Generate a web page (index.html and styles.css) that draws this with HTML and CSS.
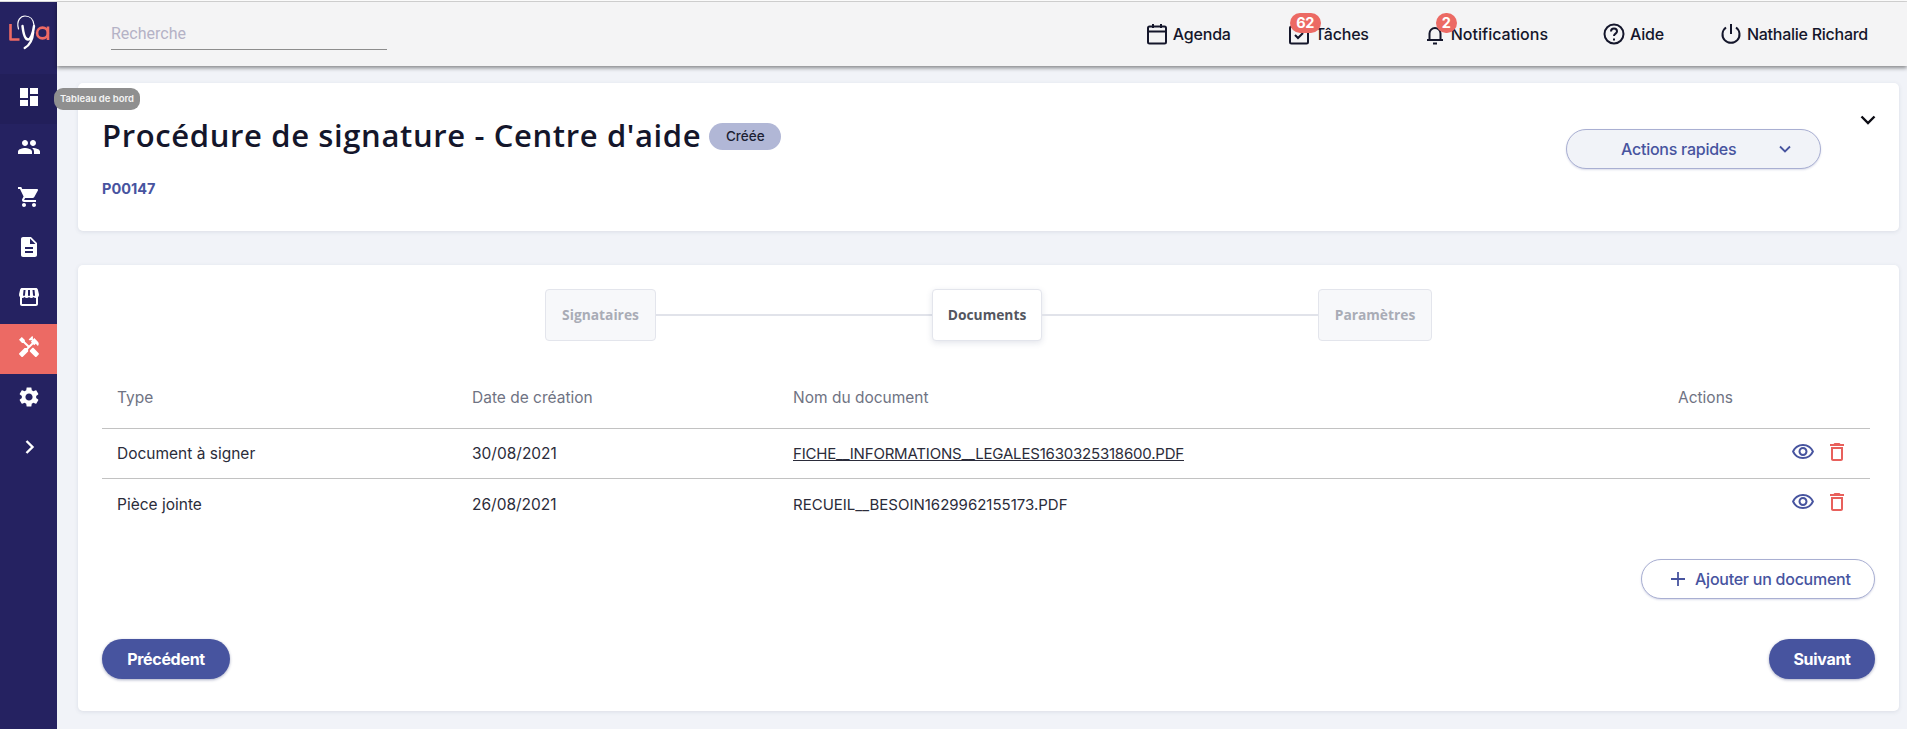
FILE: index.html
```html
<!DOCTYPE html>
<html lang="fr">
<head>
<meta charset="utf-8">
<title>Procédure de signature</title>
<link rel="stylesheet" href="styles.css">
</head>
<body>
<div class="app">
  <nav class="sidebar">
    <div class="logo">
      <svg width="57" height="64" viewBox="0 0 57 64" fill="none">
        <path d="M10.500 22V37.500H19.500" stroke="#ee6a64" stroke-width="2.600" stroke-linejoin="round"/>
        <path d="M22.500 24c1 9 3 13.500 5.500 13.500S33 32 34 24M33.200 30c-.6 8-3 13-8.500 16" stroke="#fff" stroke-width="2.400" stroke-linecap="round"/>
        <path d="M18.500 27C16 18 21 14 25 14c5 0 8.500 3.500 9 9" stroke="#fff" stroke-width="1.200" stroke-linecap="round"/>
        <circle cx="42.500" cy="31" r="5.400" stroke="#ee6a64" stroke-width="2.600"/>
        <path d="M48 24.500V38" stroke="#ee6a64" stroke-width="2.600"/>
      </svg>
    </div>
    <a class="nav-item nav-dark">
      <svg class="nav-icon" viewBox="0 0 24 24"><path d="M3 13h8V3H3v10zm0 8h8v-6H3v6zm10 0h8V11h-8v10zm0-18v6h8V3h-8z"/></svg>
      <span class="tooltip">Tableau de bord</span>
    </a>
    <a class="nav-item">
      <svg class="nav-icon" viewBox="0 0 24 24"><path d="M16 11c1.660 0 2.990-1.340 2.990-3S17.660 5 16 5c-1.660 0-3 1.340-3 3s1.340 3 3 3zm-8 0c1.660 0 2.990-1.340 2.990-3S9.660 5 8 5C6.340 5 5 6.340 5 8s1.340 3 3 3zm0 2c-2.330 0-7 1.170-7 3.500V19h14v-2.500c0-2.330-4.670-3.500-7-3.500zm8 0c-.29 0-.62.020-.97.050 1.160.84 1.970 1.970 1.970 3.450V19h6v-2.500c0-2.330-4.670-3.500-7-3.500z"/></svg>
    </a>
    <a class="nav-item">
      <svg class="nav-icon" viewBox="0 0 24 24"><path d="M7 18c-1.100 0-1.990.9-1.990 2S5.900 22 7 22s2-.9 2-2-.9-2-2-2zM1 2v2h2l3.600 7.590-1.350 2.450c-.16.280-.25.610-.25.960 0 1.100.9 2 2 2h12v-2H7.420c-.14 0-.25-.11-.25-.25l.03-.12.9-1.630h7.450c.75 0 1.410-.41 1.750-1.030l3.580-6.490c.08-.14.120-.31.120-.48 0-.55-.45-1-1-1H5.210l-.94-2H1zm16 16c-1.100 0-1.990.9-1.990 2s.89 2 1.990 2 2-.9 2-2-.9-2-2-2z"/></svg>
    </a>
    <a class="nav-item">
      <svg class="nav-icon" viewBox="0 0 24 24"><path d="M14 2H6c-1.100 0-1.990.9-1.990 2L4 20c0 1.100.89 2 1.990 2H18c1.100 0 2-.9 2-2V8l-6-6zm2 16H8v-2h8v2zm0-4H8v-2h8v2zm-3-5V3.500L18.500 9H13z"/></svg>
    </a>
    <a class="nav-item">
      <svg class="nav-icon" viewBox="0 0 24 24"><path d="M21.900 8.890l-1.050-4.370c-.22-.9-1-1.520-1.910-1.520H5.050c-.9 0-1.690.63-1.900 1.520L2.100 8.890c-.24 1.020-.02 2.060.62 2.880.08.110.19.190.28.290V19c0 1.100.9 2 2 2h14c1.100 0 2-.9 2-2v-6.940c.09-.09.2-.18.280-.28.640-.82.870-1.870.62-2.890zM7.020 11c-.55 0-.97-.4-1-.9L6.570 5h1.970l-.56 5.030c-.07.55-.47.970-.96.970zM12 11c-.6 0-1-.5-1-1V5h2v5c0 .5-.4 1-1 1zm5 0c-.5 0-.9-.4-1-1l-.5-5h2l.5 5c0 .5-.4 1-1 1zM5 19v-6.030c.08.010.15.030.23.030.87 0 1.660-.36 2.240-.95.6.6 1.400.95 2.310.95.87 0 1.650-.36 2.230-.93.590.57 1.390.93 2.290.93.840 0 1.640-.35 2.240-.95.580.59 1.370.95 2.240.95.080 0 .15-.02.230-.03V19H5z"/></svg>
    </a>
    <a class="nav-item nav-active">
      <svg class="nav-icon" viewBox="0 0 24 24"><path d="M21.670 18.170l-5.300-5.300h-.99l-2.540 2.540v.99l5.300 5.300c.39.390 1.020.39 1.410 0l2.120-2.120c.39-.38.39-1.020 0-1.410z"/><path d="M17.340 10.190l1.410-1.410 2.120 2.120c1.170-1.170 1.170-3.070 0-4.240l-3.540-3.540-1.410 1.410V1.710l-.7-.71-3.540 3.540.71.710h2.830l-1.410 1.410 1.060 1.060-2.890 2.890-4.130-4.130V5.060L4.830 2.040 2 4.870 5.030 7.900h1.410l4.130 4.130-.85.850H7.600l-5.300 5.300c-.39.390-.39 1.020 0 1.410l2.120 2.120c.39.390 1.020.39 1.410 0l5.300-5.300v-2.120l5.150-5.150 1.060 1.050z"/></svg>
    </a>
    <a class="nav-item">
      <svg class="nav-icon" viewBox="0 0 24 24"><path d="M19.140 12.940c.04-.3.060-.61.060-.94 0-.32-.02-.64-.07-.94l2.030-1.580c.18-.14.230-.41.120-.61l-1.920-3.320c-.12-.22-.37-.29-.59-.22l-2.390.96c-.5-.38-1.030-.7-1.620-.94l-.36-2.540c-.04-.24-.24-.41-.48-.41h-3.840c-.24 0-.43.170-.47.410l-.36 2.540c-.59.240-1.130.57-1.620.94l-2.390-.96c-.22-.08-.47 0-.59.220L2.740 8.870c-.12.210-.08.470.12.610l2.030 1.580c-.05.3-.09.630-.09.940s.02.640.07.940l-2.030 1.580c-.18.140-.23.410-.12.610l1.920 3.320c.12.220.37.290.59.220l2.390-.96c.5.380 1.030.7 1.620.94l.36 2.540c.05.240.24.410.48.410h3.840c.24 0 .44-.17.47-.41l.36-2.540c.59-.24 1.130-.56 1.620-.94l2.390.96c.22.080.47 0 .59-.22l1.920-3.320c.12-.22.070-.47-.12-.61l-2.010-1.580zM12 15.600c-1.980 0-3.600-1.620-3.600-3.600s1.620-3.600 3.600-3.600 3.600 1.620 3.600 3.600-1.620 3.600-3.600 3.600z"/></svg>
    </a>
    <a class="nav-item">
      <svg class="nav-icon" viewBox="0 0 24 24"><path d="M9.500 6l6 6-6 6" fill="none" stroke="#fff" stroke-width="2.400"/></svg>
    </a>
  </nav>

  <div class="main">
    <header class="topbar">
      <div class="search">Recherche</div>
      <div class="top-links">
        <a class="top-link link-agenda">
          <svg class="top-icon" viewBox="0 0 24 24" fill="none" stroke="#14162b" stroke-width="2"><rect x="3" y="4.500" width="18" height="17" rx="1.500"/><path d="M3 9.500h18M8 2v4M16 2v4"/></svg>
          <span>Agenda</span>
        </a>
        <a class="top-link link-tasks">
          <svg class="top-icon" viewBox="0 0 24 24" fill="none" stroke="#14162b" stroke-width="2"><rect x="3" y="4.500" width="18" height="17" rx="1.500"/><path d="M8 13l3 3 5-5"/></svg>
          <span>Tâches</span>
          <span class="badge badge-tasks">62</span>
        </a>
        <a class="top-link link-notifs">
          <svg class="top-icon" viewBox="0 0 24 24" fill="none" stroke="#14162b" stroke-width="2"><path d="M4 18h16M6.500 18v-6.500a5.500 5.500 0 0 1 11 0V18M10 21.500h4"/></svg>
          <span>Notifications</span>
          <span class="badge badge-notifs">2</span>
        </a>
        <a class="top-link link-help">
          <svg class="top-icon" viewBox="0 0 24 24" fill="none" stroke="#14162b" stroke-width="2"><circle cx="12" cy="12" r="9.500"/><path d="M9 9.500a3 3 0 0 1 6 0c0 2-3 2.300-3 4.500M12 16.500v2"/></svg>
          <span>Aide</span>
        </a>
        <a class="top-link link-user">
          <svg class="top-icon" viewBox="0 0 24 24" fill="none" stroke="#14162b" stroke-width="2"><path d="M7 5.500a8.500 8.500 0 1 0 10 0M12 2v10"/></svg>
          <span>Nathalie Richard</span>
        </a>
      </div>
    </header>

    <div class="content">
      <section class="card card-head">
        <div class="head-left">
          <div class="title-row">
            <h1>Procédure de signature - Centre d'aide</h1>
            <span class="status">Créée</span>
          </div>
          <a class="ref">P00147</a>
        </div>
        <button class="quick">
          <span>Actions rapides</span>
          <svg class="quick-chev" viewBox="0 0 14 14" fill="none"><path d="M2 4.500l5 5 5-5" stroke="#47549f" stroke-width="1.800"/></svg>
        </button>
        <svg class="collapse" viewBox="0 0 16 16" fill="none"><path d="M1.500 3.500l6.500 6.500 6.500-6.500" stroke="#0c0c14" stroke-width="2.400"/></svg>
      </section>

      <section class="card card-body">
        <div class="stepper">
          <div class="step">Signataires</div>
          <div class="step-line"></div>
          <div class="step step-current">Documents</div>
          <div class="step-line"></div>
          <div class="step">Paramètres</div>
        </div>

        <div class="table">
          <div class="row row-head">
            <div class="col-type">Type</div>
            <div class="col-date">Date de création</div>
            <div class="col-name">Nom du document</div>
            <div class="col-actions">Actions</div>
          </div>
          <div class="row row-line">
            <div class="col-type">Document à signer</div>
            <div class="col-date">30/08/2021</div>
            <div class="col-name"><a class="doc doc-link">FICHE__INFORMATIONS__LEGALES1630325318600.PDF</a></div>
            <div class="col-actions icons">
              <svg class="act" viewBox="0 0 24 24"><path fill="#47549f" d="M12 6a9.770 9.770 0 0 1 8.820 5.500A9.770 9.770 0 0 1 12 17a9.770 9.770 0 0 1-8.820-5.500A9.770 9.770 0 0 1 12 6m0-2C7 4 2.730 7.110 1 11.500 2.730 15.890 7 19 12 19s9.270-3.110 11-7.500C21.270 7.110 17 4 12 4zm0 5a2.500 2.500 0 0 1 0 5 2.500 2.500 0 0 1 0-5m0-2c-2.480 0-4.500 2.020-4.500 4.500S9.520 16 12 16s4.500-2.020 4.500-4.500S14.480 7 12 7z"/></svg>
              <svg class="act" viewBox="0 0 24 24"><path fill="#e8605c" d="M16 9v10H8V9h8m-1.500-6h-5l-1 1H5v2h14V4h-3.500l-1-1zM18 7H6v12c0 1.100.9 2 2 2h8c1.100 0 2-.9 2-2V7z"/></svg>
            </div>
          </div>
          <div class="row">
            <div class="col-type">Pièce jointe</div>
            <div class="col-date">26/08/2021</div>
            <div class="col-name"><span class="doc">RECUEIL__BESOIN1629962155173.PDF</span></div>
            <div class="col-actions icons">
              <svg class="act" viewBox="0 0 24 24"><path fill="#47549f" d="M12 6a9.770 9.770 0 0 1 8.820 5.500A9.770 9.770 0 0 1 12 17a9.770 9.770 0 0 1-8.820-5.500A9.770 9.770 0 0 1 12 6m0-2C7 4 2.730 7.110 1 11.500 2.730 15.890 7 19 12 19s9.270-3.110 11-7.500C21.270 7.110 17 4 12 4zm0 5a2.500 2.500 0 0 1 0 5 2.500 2.500 0 0 1 0-5m0-2c-2.480 0-4.500 2.020-4.500 4.500S9.520 16 12 16s4.500-2.020 4.500-4.500S14.480 7 12 7z"/></svg>
              <svg class="act" viewBox="0 0 24 24"><path fill="#e8605c" d="M16 9v10H8V9h8m-1.500-6h-5l-1 1H5v2h14V4h-3.500l-1-1zM18 7H6v12c0 1.100.9 2 2 2h8c1.100 0 2-.9 2-2V7z"/></svg>
            </div>
          </div>
        </div>

        <div class="add-wrap">
          <button class="add">
            <svg class="plus" viewBox="0 0 16 16" fill="none"><path d="M8 1v14M1 8h14" stroke="#47549f" stroke-width="1.800"/></svg>
            <span>Ajouter un document</span>
          </button>
        </div>

        <div class="nav-buttons">
          <button class="primary btn-prev">Précédent</button>
          <button class="primary btn-next">Suivant</button>
        </div>
      </section>
    </div>
  </div>
</div>
</body>
</html>
```

FILE: styles.css
```css
* { box-sizing: border-box; }
html, body { margin: 0; padding: 0; height: 100%; overflow: hidden; }
body { background: #fff; font-family: Inter, "Noto Sans", sans-serif; color: #1c1e33; }
button { font-family: inherit; cursor: pointer; }
.app { display: flex; height: 728px; margin-top: 1px; border-top: 1px solid #d9d9d9; background: #f1f3f8; }

.sidebar { width: 57px; flex: none; background: #252261; display: flex; flex-direction: column; }
.logo { height: 72px; flex: none; }
.logo svg { display: block; }
.nav-item { height: 50px; flex: none; padding-bottom: 4px; display: flex; align-items: center; justify-content: center; position: relative; }
.nav-dark { background: #221f5a; }
.nav-active { background: #ec6a64; }
.nav-icon { width: 24px; height: 24px; fill: #fff; }
.tooltip { position: absolute; left: 54px; top: 14px; height: 22px; width: 86px; border-radius: 9px; background: #8f8f8f; color: #f4f4f4; font-size: 9.500px; font-weight: 600; line-height: 22px; text-align: center; white-space: nowrap; z-index: 5; }

.main { flex: 1; min-width: 0; display: flex; flex-direction: column; }
.topbar { height: 64px; flex: none; background: #f4f4f5; box-shadow: 0 2px 4px rgba(0,0,0,.45); display: flex; align-items: flex-start; justify-content: space-between; position: relative; z-index: 2; }
.search { margin: 21px 0 0 54px; width: 276px; height: 27px; border-bottom: 1px solid #8d8d8d; color: #b4b2c6; font-family: Roboto, sans-serif; font-size: 16px; line-height: 22px; }
.top-links { display: flex; margin: 19px 39px 0 0; }
.top-link { display: flex; align-items: center; height: 26px; font-size: 16px; font-weight: 500; color: #14162b; position: relative; letter-spacing: -.2px; white-space: nowrap; }
.top-icon { width: 24px; height: 24px; margin-right: 4px; flex: none; }
.link-agenda { margin-right: 56px; }
.link-tasks { margin-right: 54px; }
.link-notifs { margin-right: 54px; letter-spacing: 0; }
.link-help { margin-right: 55px; }
.link-user { letter-spacing: -.26px; }
.badge { position: absolute; top: -8px; height: 20px; border-radius: 10px; background: #ec6a64; color: #fff; font-size: 14.500px; font-weight: 700; line-height: 20px; text-align: center; }
.badge-tasks { left: 3px; width: 31px; }
.badge-notifs { left: 13px; width: 21px; }

.content { flex: 1; padding: 17px 8px 18px 21px; display: flex; flex-direction: column; gap: 34px; }
.card { background: #fff; border-radius: 5px; box-shadow: 0 1px 4px rgba(60,70,110,.12); }
.card-head { height: 148px; flex: none; position: relative; padding: 36px 78px 0 24px; display: flex; justify-content: space-between; align-items: flex-start; }
.title-row { display: flex; align-items: flex-start; }
h1 { margin: 0; font-family: "Open Sans", sans-serif; font-size: 31px; line-height: 32px; font-weight: 600; color: #14162b; letter-spacing: .63px; white-space: nowrap; }
.status { margin: 4px 0 0 8px; height: 27px; width: 72px; border-radius: 14px; background: #b1b7d6; color: #1c1e33; font-size: 13.500px; font-weight: 500; line-height: 27px; text-align: center; }
.ref { display: block; margin-top: 28px; color: #47549f; font-size: 14.500px; font-weight: 700; line-height: 20px; }
.quick { width: 255px; height: 40px; margin-top: 10px; border: 1px solid #a9afd2; border-radius: 20px; background: #f1f3f8; color: #47549f; font-size: 16px; font-weight: 500; display: flex; align-items: center; padding: 0 28px 0 54px; justify-content: space-between; letter-spacing: -.25px; box-shadow: 0 1px 2px rgba(70,80,150,.2); }
.quick-chev { width: 14px; height: 14px; }
.collapse { position: absolute; top: 30px; right: 23px; width: 16px; height: 16px; }

.card-body { height: 446px; flex: none; padding: 24px 24px 0 24px; display: flex; flex-direction: column; }
.stepper { display: flex; align-items: center; padding: 0 443px; }
.step { height: 52px; width: 111px; flex: none; background: #f7f8fa; border: 1px solid #e3e5ec; border-radius: 4px; font-family: "Open Sans", sans-serif; font-size: 13.800px; font-weight: 700; line-height: 50px; text-align: center; color: #a9acb6; }
.step:last-child { width: 114px; }
.step-current { width: 110px; background: #fff; color: #54565f; box-shadow: 0 2px 6px rgba(60,70,110,.14); }
.step-line { flex: 1; height: 2px; background: #e1e3ea; }

.table { margin: 37px 5px 0 0; }
.row { display: flex; height: 50px; align-items: center; font-size: 15.500px; color: #2b2c3a; }
.row-head { height: 51px; color: #6f7383; border-bottom: 1px solid #c2c2c2; padding-bottom: 12px; }
.row-line { border-bottom: 1px solid #c2c2c2; }
.col-type { width: 370px; padding-left: 15px; flex: none; }
.col-date { width: 321px; flex: none; }
.col-name { flex: 1; }
.col-actions { width: 192px; flex: none; }
.icons { display: flex; justify-content: flex-end; gap: 10px; padding-right: 21px; padding-bottom: 4px; }
.act { width: 24px; height: 24px; flex: none; }
.doc { font-size: 15px; }
.doc-link { color: #2b2c3a; text-decoration: underline; letter-spacing: -.2px; }

.add-wrap { display: flex; justify-content: flex-end; margin-top: 30px; }
.add { width: 234px; height: 40px; border: 1px solid #a9afd2; border-radius: 20px; background: #fff; color: #47549f; font-size: 16px; font-weight: 500; display: flex; align-items: center; padding: 0 0 0 28px; letter-spacing: -.25px; box-shadow: 0 1px 2px rgba(70,80,150,.2); }
.plus { width: 16px; height: 16px; margin-right: 9px; flex: none; }

.nav-buttons { display: flex; justify-content: space-between; margin-top: 40px; }
.primary { height: 40px; border: 0; border-radius: 20px; background: #47549f; color: #fff; font-size: 16px; font-weight: 700; letter-spacing: -.3px; box-shadow: 0 1px 3px rgba(40,50,110,.4); }
.btn-prev { width: 128px; }
.btn-next { width: 106px; }
```
